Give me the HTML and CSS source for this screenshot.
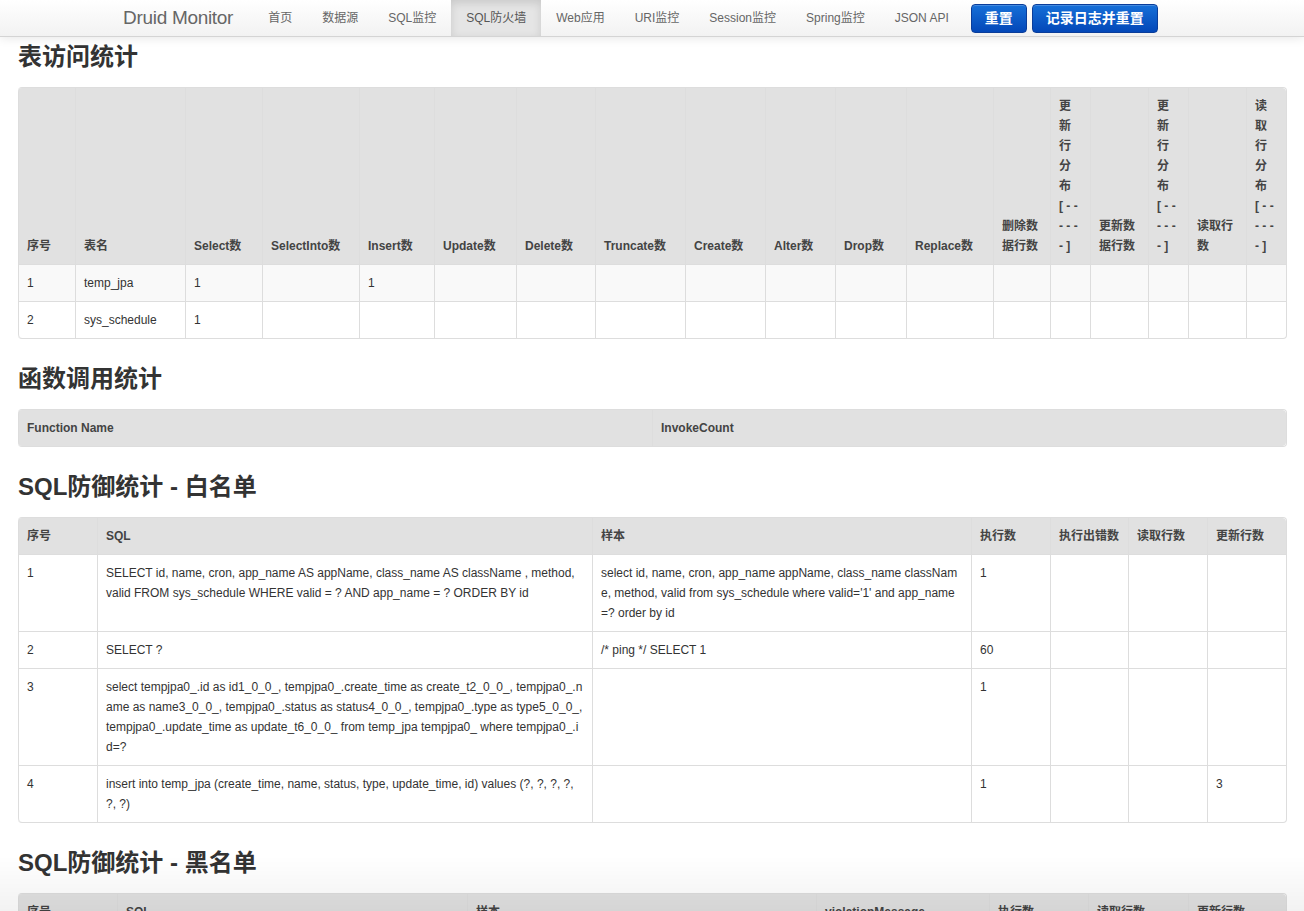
FILE: index.html
```html
<!DOCTYPE html>
<html lang="zh-CN">
<head>
<meta charset="utf-8">
<title>Druid Monitor</title>
<link rel="stylesheet" href="styles.css">
</head>
<body>
<div class="navbar">
  <div class="navbar-inner">
    <a class="brand" href="#">Druid Monitor</a>
    <ul class="nav">
      <li><a href="#">首页</a></li>
      <li><a href="#">数据源</a></li>
      <li><a href="#">SQL监控</a></li>
      <li class="active"><a href="#">SQL防火墙</a></li>
      <li><a href="#">Web应用</a></li>
      <li><a href="#">URI监控</a></li>
      <li><a href="#">Session监控</a></li>
      <li><a href="#">Spring监控</a></li>
      <li><a href="#">JSON API</a></li>
    </ul>
    <div class="actions">
      <button class="btn">重置</button>
      <button class="btn">记录日志并重置</button>
    </div>
  </div>
</div>

<div class="container">
  <h3>表访问统计</h3>
  <table class="table t-access striped">
    <colgroup>
      <col><col><col><col><col><col><col><col><col><col><col><col><col><col><col><col><col><col>
    </colgroup>
    <thead>
      <tr>
        <th>序号</th><th>表名</th><th>Select数</th><th>SelectInto数</th><th>Insert数</th><th>Update数</th><th>Delete数</th><th>Truncate数</th><th>Create数</th><th>Alter数</th><th>Drop数</th><th>Replace数</th><th>删除数据行数</th><th>更新行分布<span class="dist">[ - - - - - - ]</span></th><th>更新数据行数</th><th>更新行分布<span class="dist">[ - - - - - - ]</span></th><th>读取行数</th><th>读取行分布<span class="dist">[ - - - - - - ]</span></th>
      </tr>
    </thead>
    <tbody>
      <tr><td>1</td><td>temp_jpa</td><td>1</td><td></td><td>1</td><td></td><td></td><td></td><td></td><td></td><td></td><td></td><td></td><td></td><td></td><td></td><td></td><td></td></tr>
      <tr><td>2</td><td>sys_schedule</td><td>1</td><td></td><td></td><td></td><td></td><td></td><td></td><td></td><td></td><td></td><td></td><td></td><td></td><td></td><td></td><td></td></tr>
    </tbody>
  </table>

  <h3>函数调用统计</h3>
  <table class="table t-func">
    <colgroup><col><col></colgroup>
    <thead>
      <tr><th>Function Name</th><th>InvokeCount</th></tr>
    </thead>
  </table>

  <h3>SQL防御统计 - 白名单</h3>
  <table class="table t-white">
    <colgroup><col><col><col><col><col><col><col></colgroup>
    <thead>
      <tr><th>序号</th><th>SQL</th><th>样本</th><th>执行数</th><th>执行出错数</th><th>读取行数</th><th>更新行数</th></tr>
    </thead>
    <tbody>
      <tr>
        <td>1</td>
        <td>SELECT id, name, cron, app_name AS appName, class_name AS className , method, valid FROM sys_schedule WHERE valid = ? AND app_name = ? ORDER BY id</td>
        <td>select id, name, cron, app_name appName, class_name className, method, valid from sys_schedule where valid='1' and app_name=? order by id</td>
        <td>1</td><td></td><td></td><td></td>
      </tr>
      <tr>
        <td>2</td>
        <td>SELECT ?</td>
        <td>/* ping */ SELECT 1</td>
        <td>60</td><td></td><td></td><td></td>
      </tr>
      <tr>
        <td>3</td>
        <td>select tempjpa0_.id as id1_0_0_, tempjpa0_.create_time as create_t2_0_0_, tempjpa0_.name as name3_0_0_, tempjpa0_.status as status4_0_0_, tempjpa0_.type as type5_0_0_, tempjpa0_.update_time as update_t6_0_0_ from temp_jpa tempjpa0_ where tempjpa0_.id=?</td>
        <td></td>
        <td>1</td><td></td><td></td><td></td>
      </tr>
      <tr>
        <td>4</td>
        <td>insert into temp_jpa (create_time, name, status, type, update_time, id) values (?, ?, ?, ?, ?, ?)</td>
        <td></td>
        <td>1</td><td></td><td></td><td>3</td>
      </tr>
    </tbody>
  </table>

  <h3>SQL防御统计 - 黑名单</h3>
  <table class="table t-black">
    <colgroup><col><col><col><col><col><col><col></colgroup>
    <thead>
      <tr><th>序号</th><th>SQL</th><th>样本</th><th>violationMessage</th><th>执行数</th><th>读取行数</th><th>更新行数</th></tr>
    </thead>
    <tbody>
      <tr><td></td><td></td><td></td><td></td><td></td><td></td><td></td></tr>
    </tbody>
  </table>
</div>
<div class="bottom-fade"></div>
</body>
</html>
```
FILE: styles.css
```css
html, body {
  margin: 0;
  padding: 0;
}
body {
  font-family: "Liberation Sans", Arial, "Noto Sans CJK SC", sans-serif;
  font-size: 12px;
  line-height: 20px;
  color: #333;
  background: #fff;
}

/* navbar */
.navbar {
  position: relative;
  z-index: 10;
}
.navbar-inner {
  height: 36px;
  display: flex;
  align-items: flex-start;
  padding-left: 103px;
  background: linear-gradient(to bottom, #ffffff, #f2f2f2);
  border-bottom: 1px solid #d4d4d4;
  box-shadow: 0 1px 10px rgba(0, 0, 0, 0.1);
}
.brand {
  display: block;
  padding: 5px 20px 0 20px;
  height: 31px;
  font-size: 19px;
  line-height: 26px;
  color: #666;
  text-decoration: none;
  letter-spacing: -0.3px;
}
.nav {
  display: flex;
  list-style: none;
  margin: 0;
  padding: 0;
}
.nav li a {
  display: block;
  padding: 8px 15px;
  height: 20px;
  line-height: 20px;
  color: #666;
  text-decoration: none;
  font-size: 12px;
}
.nav li.active a {
  background: #e5e5e5;
  color: #555;
  box-shadow: inset 0 3px 8px rgba(0, 0, 0, 0.125);
}
.actions {
  display: flex;
  gap: 5px;
  margin-left: 7px;
  padding-top: 4px;
}
.btn {
  height: 29px;
  padding: 0 13px;
  border: 1px solid #0a3d9a;
  border-radius: 4px;
  background: linear-gradient(to bottom, #1670d8, #0347b8);
  color: #fff;
  font-family: "Liberation Sans", Arial, "Noto Sans CJK SC", sans-serif;
  font-size: 14px;
  font-weight: bold;
  line-height: 27px;
  box-shadow: inset 0 1px 0 rgba(255, 255, 255, 0.2);
  cursor: pointer;
}

/* content */
.container {
  padding: 0 17px 0 18px;
}
h3 {
  margin: 0 0 10px;
  font-size: 24px;
  line-height: 40px;
  font-weight: bold;
  color: #333;
}
.table + h3 {
  margin-top: 20px;
}

.table {
  width: 100%;
  table-layout: fixed;
  border-collapse: separate;
  border-spacing: 0;
  border: 1px solid #ddd;
  border-left: 0;
  border-radius: 4px;
  margin-bottom: 20px;
}
.table th,
.table td {
  padding: 8px;
  line-height: 20px;
  text-align: left;
  vertical-align: top;
  border-left: 1px solid #ddd;
  border-top: 1px solid #ddd;
  word-break: break-all;
  font-size: 12px;
}
.table thead tr:first-child th {
  border-top: 0;
}
.table thead th {
  background: #e1e1e1;
  font-weight: bold;
  color: #444;
  vertical-align: bottom;
}
.table thead th:first-child {
  border-top-left-radius: 4px;
}
.table thead th:last-child {
  border-top-right-radius: 4px;
}
.table tbody tr:last-child td:first-child {
  border-bottom-left-radius: 4px;
}
.table tbody tr:last-child td:last-child {
  border-bottom-right-radius: 4px;
}
.t-func thead th:first-child {
  border-bottom-left-radius: 4px;
}
.t-func thead th:last-child {
  border-bottom-right-radius: 4px;
}
.striped tbody tr:nth-child(odd) td {
  background: #f9f9f9;
}
.table th {
  word-break: normal;
  overflow-wrap: normal;
}
.dist {
  display: block;
}

/* column widths: table access */
.t-access col:nth-child(1) { width: 57px; }
.t-access col:nth-child(2) { width: 110px; }
.t-access col:nth-child(3) { width: 77px; }
.t-access col:nth-child(4) { width: 97px; }
.t-access col:nth-child(5) { width: 75px; }
.t-access col:nth-child(6) { width: 82px; }
.t-access col:nth-child(7) { width: 79px; }
.t-access col:nth-child(8) { width: 90px; }
.t-access col:nth-child(9) { width: 80px; }
.t-access col:nth-child(10) { width: 70px; }
.t-access col:nth-child(11) { width: 71px; }
.t-access col:nth-child(12) { width: 87px; }
.t-access col:nth-child(13) { width: 57px; }
.t-access col:nth-child(14) { width: 40px; }
.t-access col:nth-child(15) { width: 58px; }
.t-access col:nth-child(16) { width: 40px; }
.t-access col:nth-child(17) { width: 58px; }
.t-access col:nth-child(18) { width: 40px; }

.t-func col:nth-child(1) { width: 634px; }
.t-func col:nth-child(2) { width: 634px; }

.t-white col:nth-child(1) { width: 79px; }
.t-white col:nth-child(2) { width: 495px; }
.t-white col:nth-child(3) { width: 379px; }
.t-white col:nth-child(4) { width: 79px; }
.t-white col:nth-child(5) { width: 78px; }
.t-white col:nth-child(6) { width: 79px; }
.t-white col:nth-child(7) { width: 79px; }

.t-black col:nth-child(1) { width: 99px; }
.t-black col:nth-child(2) { width: 350px; }
.t-black col:nth-child(3) { width: 349px; }
.t-black col:nth-child(4) { width: 173px; }
.t-black col:nth-child(5) { width: 99px; }
.t-black col:nth-child(6) { width: 100px; }
.t-black col:nth-child(7) { width: 98px; }

.bottom-fade {
  position: fixed;
  left: 0;
  right: 0;
  bottom: 0;
  height: 55px;
  background: linear-gradient(to bottom, rgba(0, 0, 0, 0), rgba(0, 0, 0, 0.05));
  pointer-events: none;
}
```
